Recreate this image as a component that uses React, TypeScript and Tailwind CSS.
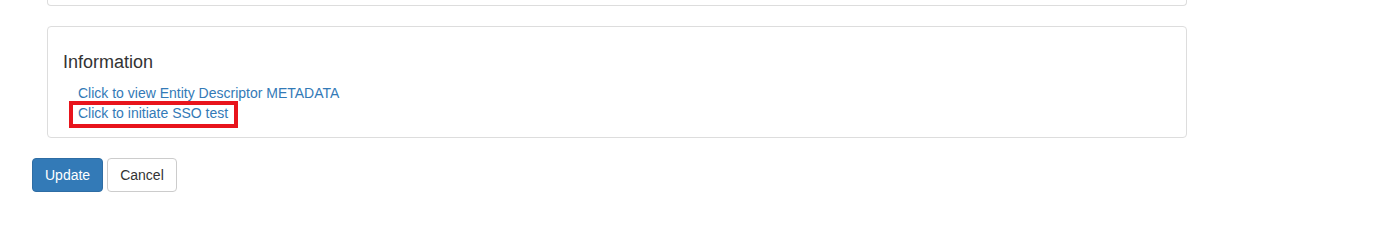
import React from 'react';

const App: React.FC = () => {
  return (
    <div className="min-h-[208px] bg-white pl-[32px] text-[14px] leading-[20px] text-[#333] [font-family:'Liberation_Sans',Arial,sans-serif]">
      <div className="ml-[15px] w-[1140px]">
        {/* tail of the previous panel */}
        <div className="h-[6px] rounded-b-[4px] border border-t-0 border-[#ddd]" />

        <div className="mt-[20px] h-[112px] rounded-[4px] border border-[#ddd] px-[15px] pt-[25px]">
          <h4 className="text-[18px] leading-[20px] font-normal text-[#333]">Information</h4>
          <div className="mt-[11px] pl-[15px]">
            <div>
              <a href="#" className="text-[#337ab7] hover:underline">
                Click to view Entity Descriptor METADATA
              </a>
            </div>
            <div>
              <span className="relative inline-block">
                <a href="#" className="text-[#337ab7] hover:underline">
                  Click to initiate SSO test
                </a>
                <span className="pointer-events-none absolute left-[-9px] top-[-2px] h-[27px] w-[169px] border-4 border-[#e8141c]" />
              </span>
            </div>
          </div>
        </div>
      </div>

      <div className="mt-[20px] flex gap-[4px]">
        <button className="h-[34px] rounded-[4px] border border-[#2e6da4] bg-[#337ab7] px-[12px] text-[14px] text-white">
          Update
        </button>
        <button className="h-[34px] rounded-[4px] border border-[#ccc] bg-white px-[12px] text-[14px] text-[#333]">
          Cancel
        </button>
      </div>
    </div>
  );
};

export default App;
